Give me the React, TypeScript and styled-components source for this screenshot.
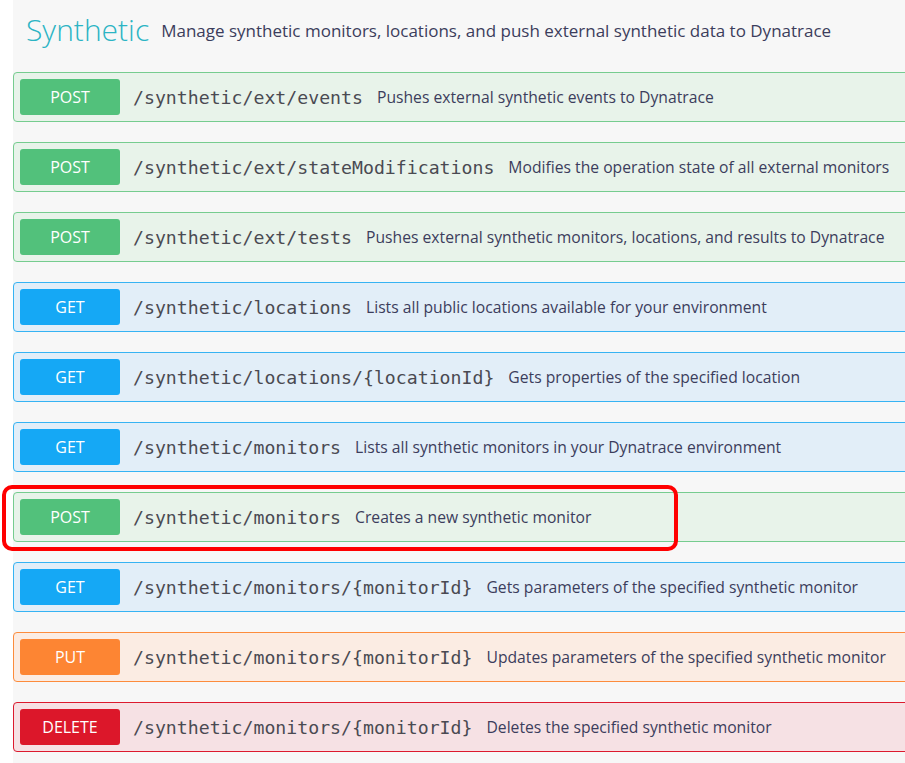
import React from 'react';
import styled, { createGlobalStyle } from 'styled-components';

type Method = 'POST' | 'GET' | 'PUT' | 'DELETE';

const palette: Record<Method, { bg: string; border: string; badge: string }> = {
  POST: { bg: '#e8f3ea', border: '#76cc8f', badge: '#52c17b' },
  GET: { bg: '#e2eef8', border: '#36b3f3', badge: '#15a8f5' },
  PUT: { bg: '#fbece3', border: '#fd8c3c', badge: '#fd8533' },
  DELETE: { bg: '#f6e1e4', border: '#dc1a2e', badge: '#dc172a' },
};

const GlobalStyle = createGlobalStyle`
  html, body {
    margin: 0;
    padding: 0;
    background: #ffffff;
    overflow: hidden;
  }
`;

const Page = styled.div`
  margin-left: 13px;
  width: 892px;
  height: 763px;
  background: #f7f7f7;
  font-family: 'Open Sans', 'Noto Sans', sans-serif;
`;

const Header = styled.div`
  display: flex;
  align-items: center;
  gap: 12px;
  height: 58px;
  padding-left: 13px;
  box-sizing: border-box;
  margin-bottom: 14px;
`;

const Title = styled.h2`
  margin: 0;
  font-size: 30px;
  font-weight: 300;
  color: #2bb4c4;
`;

const Subtitle = styled.span`
  font-size: 17px;
  color: #3c3d5c;
  padding-top: 2px;
`;

const List = styled.div`
  display: flex;
  flex-direction: column;
  gap: 20px;
`;

const RowWrap = styled.div`
  position: relative;
`;

const Row = styled.div<{ method: Method }>`
  display: flex;
  align-items: center;
  height: 50px;
  box-sizing: border-box;
  width: 900px;
  padding-left: 6px;
  border: 1px solid ${({ method }) => palette[method].border};
  border-radius: 4px;
  background: ${({ method }) => palette[method].bg};
`;

const Badge = styled.span<{ method: Method }>`
  display: flex;
  align-items: center;
  justify-content: center;
  width: 100px;
  height: 36px;
  border-radius: 3px;
  background: ${({ method }) => palette[method].badge};
  color: #fff;
  font-size: 16px;
  margin-right: 13px;
`;

const Path = styled.span`
  font-family: 'DejaVu Sans Mono', 'Liberation Mono', monospace;
  font-size: 18.2px;
  color: #4a4a52;
  margin-right: 14px;
  white-space: nowrap;
`;

const Desc = styled.span`
  font-size: 15.7px;
  color: #3c3d5c;
  white-space: nowrap;
`;

const Highlight = styled.div`
  position: absolute;
  left: -11px;
  top: -7px;
  width: 668px;
  height: 58px;
  border: 4px solid #ff0000;
  border-radius: 10px;
  pointer-events: none;
`;

const endpoints: { method: Method; path: string; desc: string; mark?: boolean }[] = [
  { method: 'POST', path: '/synthetic/ext/events', desc: 'Pushes external synthetic events to Dynatrace' },
  { method: 'POST', path: '/synthetic/ext/stateModifications', desc: 'Modifies the operation state of all external monitors' },
  { method: 'POST', path: '/synthetic/ext/tests', desc: 'Pushes external synthetic monitors, locations, and results to Dynatrace' },
  { method: 'GET', path: '/synthetic/locations', desc: 'Lists all public locations available for your environment' },
  { method: 'GET', path: '/synthetic/locations/{locationId}', desc: 'Gets properties of the specified location' },
  { method: 'GET', path: '/synthetic/monitors', desc: 'Lists all synthetic monitors in your Dynatrace environment' },
  { method: 'POST', path: '/synthetic/monitors', desc: 'Creates a new synthetic monitor', mark: true },
  { method: 'GET', path: '/synthetic/monitors/{monitorId}', desc: 'Gets parameters of the specified synthetic monitor' },
  { method: 'PUT', path: '/synthetic/monitors/{monitorId}', desc: 'Updates parameters of the specified synthetic monitor' },
  { method: 'DELETE', path: '/synthetic/monitors/{monitorId}', desc: 'Deletes the specified synthetic monitor' },
];

export default function App() {
  return (
    <>
      <GlobalStyle />
      <Page>
        <Header>
          <Title>Synthetic</Title>
          <Subtitle>Manage synthetic monitors, locations, and push external synthetic data to Dynatrace</Subtitle>
        </Header>
        <List>
          {endpoints.map((e, i) => (
            <RowWrap key={i}>
              <Row method={e.method}>
                <Badge method={e.method}>{e.method}</Badge>
                <Path>{e.path}</Path>
                <Desc>{e.desc}</Desc>
              </Row>
              {e.mark && <Highlight />}
            </RowWrap>
          ))}
        </List>
      </Page>
    </>
  );
}
